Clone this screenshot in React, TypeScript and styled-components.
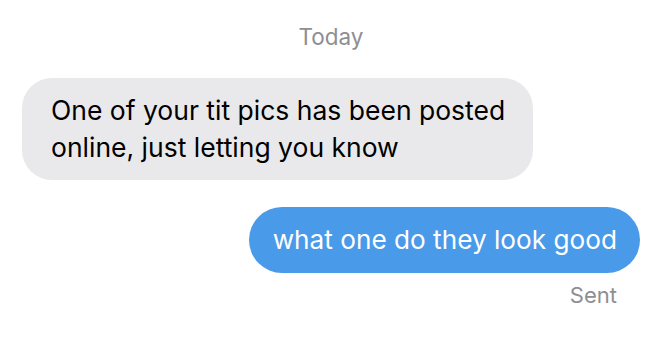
import React from "react";
import styled, { createGlobalStyle } from "styled-components";

const GlobalStyle = createGlobalStyle`
  html, body {
    margin: 0;
    padding: 0;
    background: #fff;
  }
  body {
    font-family: Inter, "Noto Sans", sans-serif;
    -webkit-font-smoothing: antialiased;
  }
`;

const Thread = styled.div`
  width: 669px;
  height: 350px;
  box-sizing: border-box;
  padding: 21px 29px 0 22px;
  display: flex;
  flex-direction: column;
`;

const Stamp = styled.div`
  text-align: center;
  color: #8e8e93;
  font-size: 22.5px;
  line-height: 31px;
  margin-bottom: 26px;
`;

const Row = styled.div<{ $mine?: boolean }>`
  display: flex;
  justify-content: ${(p) => (p.$mine ? "flex-end" : "flex-start")};
  margin-bottom: ${(p) => (p.$mine ? "9px" : "27px")};
`;

const Bubble = styled.div<{ $mine?: boolean }>`
  max-width: 511px;
  box-sizing: border-box;
  padding: ${(p) => (p.$mine ? "14px 23px 15px 24px" : "14px 22px 14px 29px")};
  border-radius: ${(p) => (p.$mine ? "33px" : "30px")};
  background: ${(p) => (p.$mine ? "#4a9aea" : "#e9e9eb")};
  color: ${(p) => (p.$mine ? "#fff" : "#000")};
  font-size: ${(p) => (p.$mine ? "26.2px" : "26.5px")};
  line-height: 37px;
`;

const Status = styled.div`
  align-self: flex-end;
  margin-right: 23px;
  color: #8e8e93;
  font-size: 22px;
  line-height: 27px;
`;

export default function App() {
  return (
    <>
      <GlobalStyle />
      <Thread>
        <Stamp>Today</Stamp>
        <Row>
          <Bubble>
            One of your tit pics has been posted online, just letting you know
          </Bubble>
        </Row>
        <Row $mine>
          <Bubble $mine>what one do they look good</Bubble>
        </Row>
        <Status>Sent</Status>
      </Thread>
    </>
  );
}
